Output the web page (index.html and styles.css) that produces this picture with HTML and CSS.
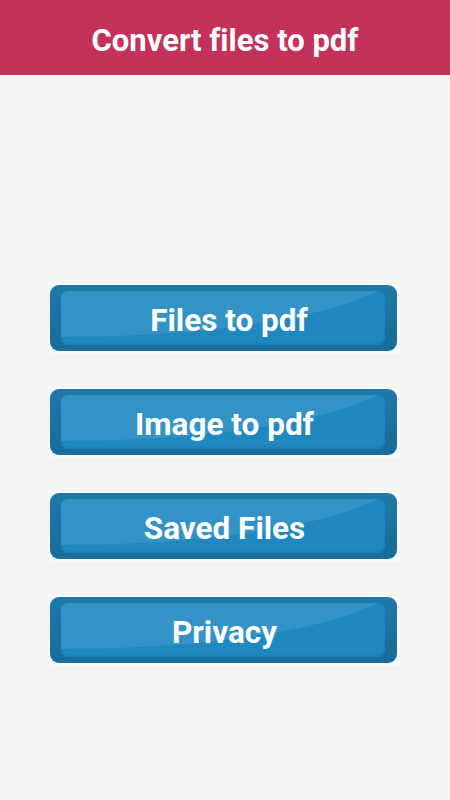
FILE: index.html
```html
<!DOCTYPE html>
<html>
<head>
<meta charset="utf-8">
<link rel="stylesheet" href="styles.css">
</head>
<body>
<header class="top-bar">
  <h1 class="title">Convert files to pdf</h1>
</header>
<main class="menu">
  <div class="btn-frame"><div class="btn"><div class="btn-inner"><span class="btn-label btn-label--shift">Files to pdf</span></div></div></div>
  <div class="btn-frame"><div class="btn"><div class="btn-inner"><span class="btn-label">Image to pdf</span></div></div></div>
  <div class="btn-frame"><div class="btn"><div class="btn-inner"><span class="btn-label">Saved Files</span></div></div></div>
  <div class="btn-frame"><div class="btn"><div class="btn-inner"><span class="btn-label">Privacy</span></div></div></div>
</main>
</body>
</html>
```
FILE: styles.css
```css
html, body {
  margin: 0;
  padding: 0;
}
body {
  width: 450px;
  height: 800px;
  background: #f4f4f4;
  font-family: Roboto, "Noto Sans", sans-serif;
  font-variant-ligatures: none;
  overflow: hidden;
}
.top-bar {
  height: 75px;
  background: #c2325a;
  display: flex;
  align-items: center;
  justify-content: center;
}
.title {
  margin: 0;
  color: #ffffff;
  font-size: 31px;
  font-weight: 700;
  line-height: 1;
  padding-top: 5px;
}
.menu {
  display: flex;
  flex-direction: column;
  align-items: flex-start;
  gap: 34px;
  padding: 209px 0 0 50px;
}
.btn-frame {
  width: 350px;
  padding: 1px 3px 3px 0;
  box-sizing: border-box;
  background: #f9f9f9;
}
.btn {
  height: 66px;
  width: 347px;
  box-sizing: border-box;
  border-radius: 9px;
  background: linear-gradient(#1d79a9, #176c9b);
  padding: 6px 12px 6px 11px;
}
.btn-inner {
  position: relative;
  height: 100%;
  border-radius: 7px;
  background: #1f89bf;
  overflow: hidden;
  display: flex;
  align-items: center;
  justify-content: center;
  box-shadow: inset 0 -2px 3px rgba(0,0,0,0.08);
}
.btn-inner::before {
  content: "";
  position: absolute;
  left: -340px;
  top: -100px;
  width: 680px;
  height: 146px;
  border-radius: 50%;
  background: #3493c6;
}
.btn-label {
  position: relative;
  color: #ffffff;
  font-size: 31.5px;
  font-weight: 700;
  line-height: 1;
  padding-top: 5px;
  margin-left: 3px;
}
.btn-label--shift {
  margin-left: 12px;
}
```
